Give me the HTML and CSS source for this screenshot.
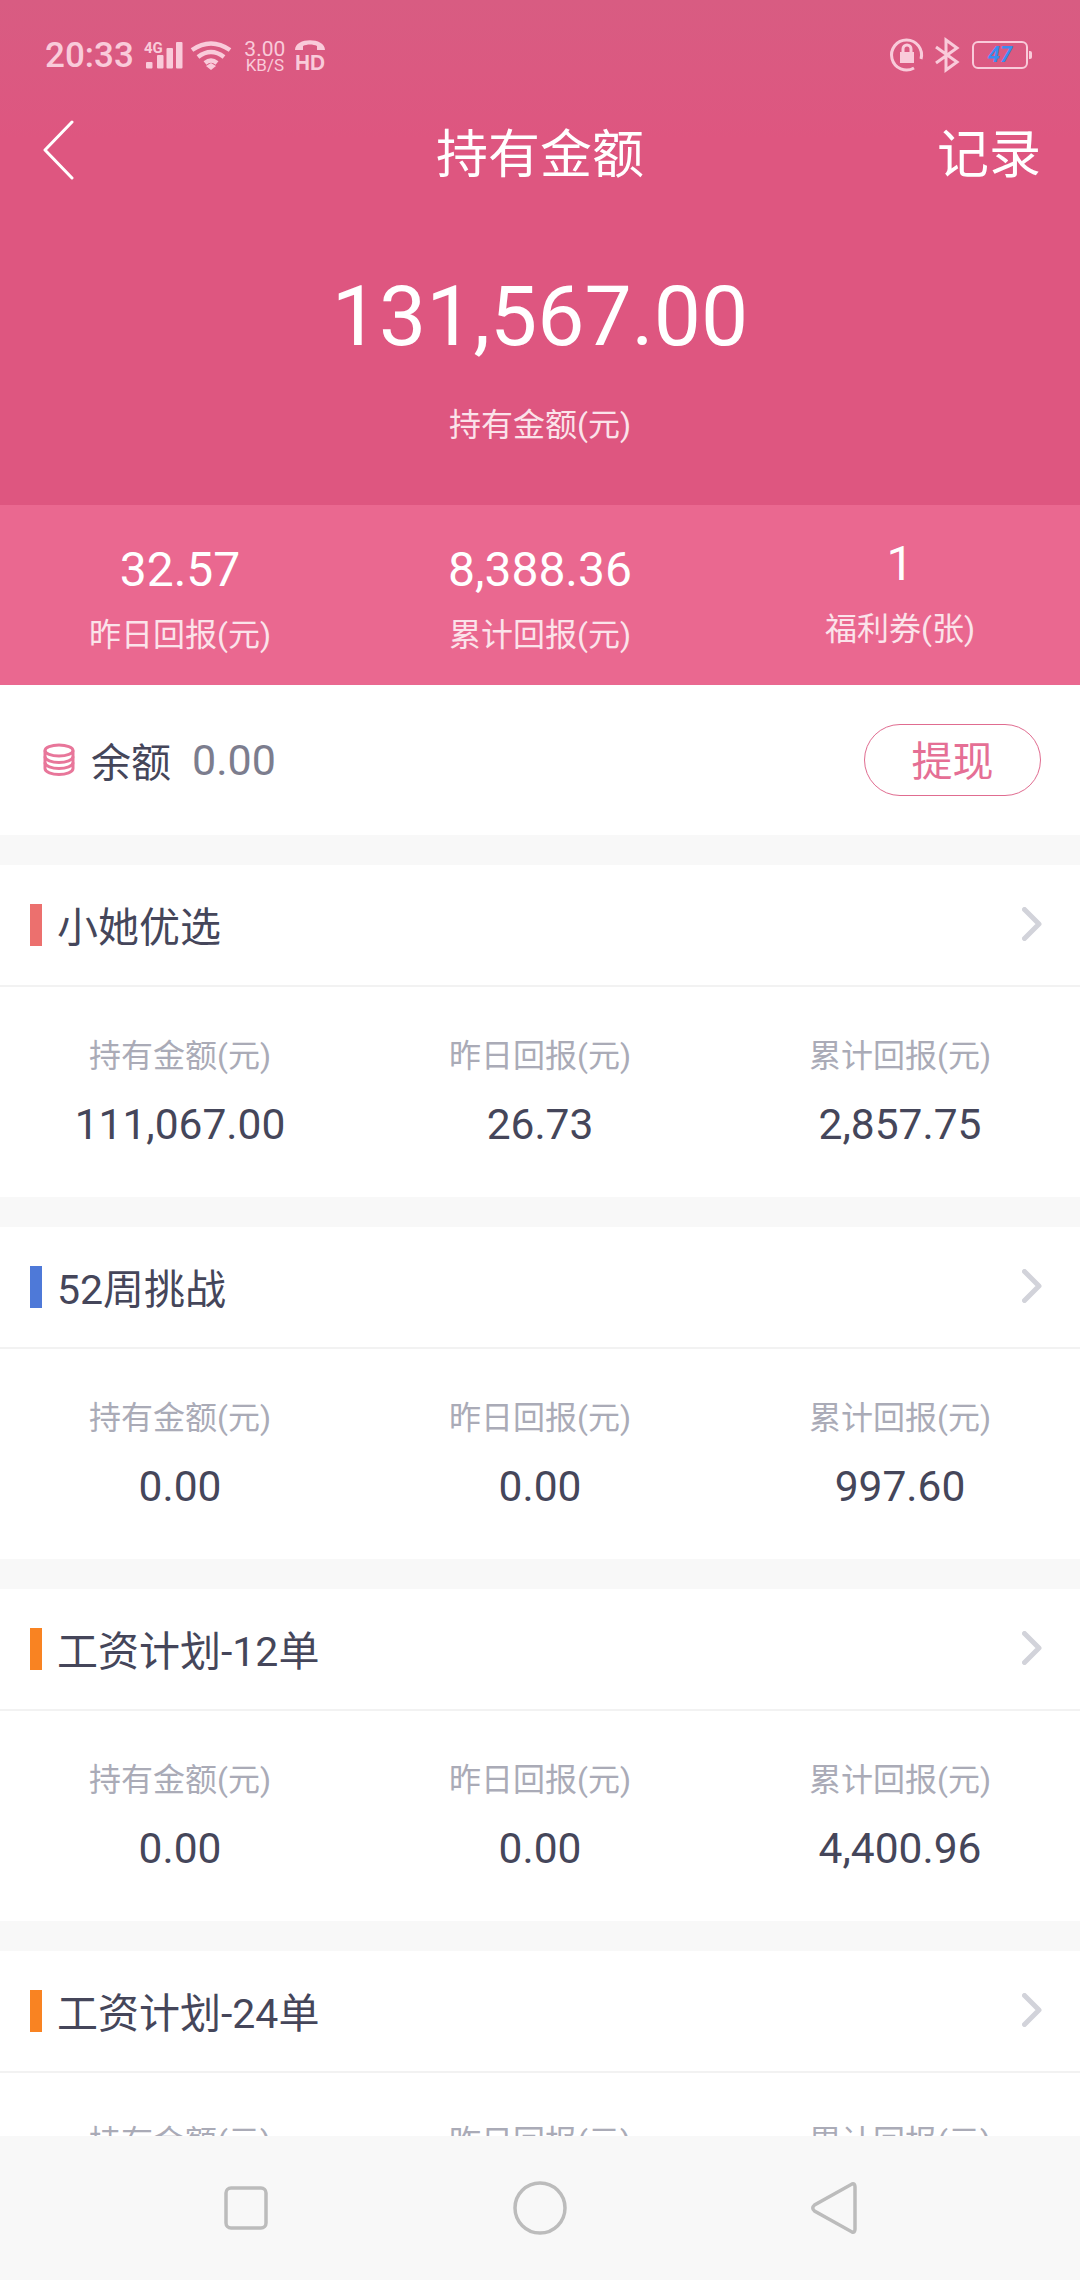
FILE: index.html
```html
<!DOCTYPE html>
<html lang="zh-CN">
<head>
    <meta charset="UTF-8">
    <meta name="viewport" content="width=device-width, initial-scale=1.0">
    <title>持有金额</title>
    <link rel="stylesheet" href="styles.css">
</head>
<body>
    <div class="screen">
        <div class="content">
            <div class="hero">
                <div class="status-bar">
                    <div class="status-left">
                        <span class="time">20:33</span>
                        <svg class="ic-signal" width="40" height="30" viewBox="0 0 40 30">
                            <text x="0" y="12" class="ic-4g">4G</text>
                            <rect x="2" y="21" width="6.500" height="6.500" rx="1"/>
                            <rect x="13" y="14" width="6.500" height="13.500" rx="1"/>
                            <rect x="22.500" y="7" width="6.500" height="20.500" rx="1"/>
                            <rect x="32" y="1" width="6.500" height="26.500" rx="1"/>
                        </svg>
                        <svg class="ic-wifi" width="40" height="30" viewBox="0 0 40 30">
                            <path d="M1 9 Q20 -4 39 9" />
                            <path d="M7 16 Q20 6 33 16" />
                            <path d="M14 22 Q20 17 26 22" />
                            <polygon class="fill" points="15,25 20,22 25,25 20,29"/>
                        </svg>
                        <div class="speed"><span class="speed-num">3.00</span><span class="speed-unit">KB/S</span></div>
                        <svg class="ic-hd" width="32" height="34" viewBox="0 0 32 34">
                            <path class="fill" d="M1 12 C1 -1 31 -1 31 12 L23 12 L23 8 C19 6 13 6 9 8 L9 12 Z"/>
                            <text x="1" y="32" class="ic-hd-text" textLength="30" lengthAdjust="spacingAndGlyphs">HD</text>
                        </svg>
                    </div>
                    <div class="status-right">
                        <svg class="ic-lock" width="34" height="34" viewBox="0 0 34 34">
                            <path d="M31 21 A15 15 0 1 0 24 30" />
                            <path class="fill" d="M10 14 h14 v11 h-14 z"/>
                            <path d="M13 14 v-3 a4 4 0 0 1 8 0 v3" />
                        </svg>
                        <svg class="ic-bt" width="26" height="34" viewBox="0 0 26 34">
                            <path d="M2 9 L23 24 L12 32 L12 2 L23 10 L2 25" />
                        </svg>
                        <div class="battery">
                            <div class="battery-body">47</div>
                            <div class="battery-cap"></div>
                        </div>
                    </div>
                </div>
                <div class="nav-bar">
                    <svg class="back" width="34" height="60" viewBox="0 0 34 60">
                        <path d="M29 2 L2 30 L29 58" />
                    </svg>
                    <h1 class="nav-title">持有金额</h1>
                    <span class="nav-action">记录</span>
                </div>
                <div class="total">131,567.00</div>
                <div class="total-label">持有金额(元)</div>
            </div>

            <div class="summary">
                <div class="summary-item">
                    <div class="summary-num">32.57</div>
                    <div class="summary-label">昨日回报(元)</div>
                </div>
                <div class="summary-item">
                    <div class="summary-num">8,388.36</div>
                    <div class="summary-label">累计回报(元)</div>
                </div>
                <div class="summary-item summary-raised">
                    <div class="summary-num">1</div>
                    <div class="summary-label">福利券(张)</div>
                </div>
            </div>

            <div class="balance">
                <svg class="ic-coins" width="32" height="34" viewBox="0 0 32 34">
                    <ellipse cx="16" cy="7.500" rx="14" ry="5.500"/>
                    <path d="M2 7.500 V25.500 C2 29 9 31.500 16 31.500 C23 31.500 30 29 30 25.500 V7.500"/>
                    <path d="M2 13.500 C2 17 9 19.500 16 19.500 C23 19.500 30 17 30 13.500"/>
                    <path d="M2 19.500 C2 23 9 25.500 16 25.500 C23 25.500 30 23 30 19.500"/>
                </svg>
                <span class="balance-label">余额</span>
                <span class="balance-num">0.00</span>
                <span class="withdraw">提现</span>
            </div>

            <section class="card">
                <div class="card-head">
                    <span class="mark mark-red"></span>
                    <span class="card-title">小她优选</span>
                    <svg class="arrow" width="20" height="34" viewBox="0 0 20 34"><path d="M2.500 2.500 L17 17 L2.500 31.500"/></svg>
                </div>
                <div class="card-body">
                    <div class="cell"><div class="cell-label">持有金额(元)</div><div class="cell-num">111,067.00</div></div>
                    <div class="cell"><div class="cell-label">昨日回报(元)</div><div class="cell-num">26.73</div></div>
                    <div class="cell"><div class="cell-label">累计回报(元)</div><div class="cell-num">2,857.75</div></div>
                </div>
            </section>

            <section class="card">
                <div class="card-head">
                    <span class="mark mark-blue"></span>
                    <span class="card-title">52周挑战</span>
                    <svg class="arrow" width="20" height="34" viewBox="0 0 20 34"><path d="M2.500 2.500 L17 17 L2.500 31.500"/></svg>
                </div>
                <div class="card-body">
                    <div class="cell"><div class="cell-label">持有金额(元)</div><div class="cell-num">0.00</div></div>
                    <div class="cell"><div class="cell-label">昨日回报(元)</div><div class="cell-num">0.00</div></div>
                    <div class="cell"><div class="cell-label">累计回报(元)</div><div class="cell-num">997.60</div></div>
                </div>
            </section>

            <section class="card">
                <div class="card-head">
                    <span class="mark mark-orange"></span>
                    <span class="card-title">工资计划-12单</span>
                    <svg class="arrow" width="20" height="34" viewBox="0 0 20 34"><path d="M2.500 2.500 L17 17 L2.500 31.500"/></svg>
                </div>
                <div class="card-body">
                    <div class="cell"><div class="cell-label">持有金额(元)</div><div class="cell-num">0.00</div></div>
                    <div class="cell"><div class="cell-label">昨日回报(元)</div><div class="cell-num">0.00</div></div>
                    <div class="cell"><div class="cell-label">累计回报(元)</div><div class="cell-num">4,400.96</div></div>
                </div>
            </section>

            <section class="card">
                <div class="card-head">
                    <span class="mark mark-orange"></span>
                    <span class="card-title">工资计划-24单</span>
                    <svg class="arrow" width="20" height="34" viewBox="0 0 20 34"><path d="M2.500 2.500 L17 17 L2.500 31.500"/></svg>
                </div>
                <div class="card-body">
                    <div class="cell"><div class="cell-label">持有金额(元)</div></div>
                    <div class="cell"><div class="cell-label">昨日回报(元)</div></div>
                    <div class="cell"><div class="cell-label">累计回报(元)</div></div>
                </div>
            </section>
        </div>

        <div class="sys-nav">
            <svg width="44" height="44" viewBox="0 0 44 44"><rect x="2" y="2" width="40" height="40" rx="5"/></svg>
            <svg width="54" height="54" viewBox="0 0 54 54"><circle cx="27" cy="27" r="25"/></svg>
            <svg width="46" height="54" viewBox="0 0 46 54"><path d="M41 3 Q44 2 44 6 V48 Q44 52 41 51 L3.500 30 Q0 27 3.500 24 Z"/></svg>
        </div>
    </div>
</body>
</html>
```

FILE: styles.css
```css
* {
    box-sizing: border-box;
}
html, body {
    margin: 0;
    padding: 0;
}
body {
    font-family: Roboto, "Noto Sans CJK SC", sans-serif;
    background: #f8f8f8;
}
.screen {
    width: 1080px;
    height: 2280px;
    display: flex;
    flex-direction: column;
    overflow: hidden;
}
.content {
    flex: 1;
    min-height: 0;
    overflow: hidden;
}
.hero {
    height: 505px;
    background: linear-gradient(#d85c82, #de5680 140px);
    color: #fff;
    text-align: center;
}
.status-bar {
    height: 105px;
    padding: 38px 48px 0 45px;
    display: flex;
    justify-content: space-between;
    align-items: flex-start;
    color: #f9cbda;
}
.status-left, .status-right {
    display: flex;
    align-items: center;
}
.status-bar svg {
    fill: #f9cbda;
    stroke: none;
    overflow: visible;
}
.time {
    font-size: 35px;
    font-weight: 500;
    line-height: 36px;
}
.ic-signal {
    margin-left: 10px;
}
.ic-4g {
    font-size: 15px;
    font-weight: 700;
}
.status-bar .ic-wifi {
    margin-left: 7px;
    fill: none;
}
.ic-wifi path {
    fill: none;
    stroke: #f9cbda;
    stroke-width: 4.500;
}
.ic-wifi .fill {
    fill: #f9cbda;
}
.speed {
    margin-left: 13px;
    display: flex;
    flex-direction: column;
    width: 42px;
    line-height: 1;
    text-align: center;
}
.speed-num {
    font-size: 21px;
    height: 18px;
}
.speed-unit {
    font-size: 17px;
    white-space: nowrap;
}
.ic-hd {
    margin-left: 8px;
    margin-top: -2px;
}
.ic-hd-text {
    font-family: "Liberation Sans", sans-serif;
    font-size: 22px;
    font-weight: 700;
}
.status-bar .ic-lock, .status-bar .ic-bt {
    fill: none;
}
.ic-lock path, .ic-bt path {
    fill: none;
    stroke: #f9cbda;
    stroke-width: 3;
}
.ic-lock .fill {
    fill: #f9cbda;
    stroke: none;
}
.ic-bt {
    margin-left: 10px;
}
.battery {
    margin-left: 12px;
    display: flex;
    align-items: center;
}
.battery-body {
    width: 56px;
    height: 28px;
    border: 2px solid #f9cbda;
    border-radius: 6px;
    color: #3b8cf0;
    font-size: 22px;
    font-weight: 700;
    font-style: italic;
    line-height: 24px;
    text-align: center;
}
.battery-cap {
    width: 3px;
    height: 8px;
    margin-left: 1px;
    background: #f9cbda;
    border-radius: 0 2px 2px 0;
}
.nav-bar {
    height: 90px;
    padding: 0 39px 0 43px;
    display: flex;
    align-items: center;
    justify-content: space-between;
    position: relative;
}
.back {
    fill: none;
    stroke: #fff;
    stroke-width: 3;
    stroke-linecap: round;
    stroke-linejoin: round;
}
.nav-title {
    position: absolute;
    left: 0;
    right: 0;
    margin: 0;
    font-size: 52px;
    font-weight: 400;
    text-align: center;
}
.nav-action {
    font-size: 52px;
}
.total {
    margin-top: 72px;
    font-size: 84px;
    line-height: 100px;
}
.total-label {
    margin-top: 34px;
    font-size: 32px;
    line-height: 48px;
    color: #fbe3ea;
}
.summary {
    height: 180px;
    background: #ea6890;
    color: #fff;
    display: grid;
    grid-template-columns: repeat(3, 1fr);
    text-align: center;
}
.summary-item {
    padding-top: 37px;
}
.summary-raised {
    padding-top: 31px;
}
.summary-num {
    font-size: 48px;
    line-height: 56px;
}
.summary-label {
    margin-top: 13px;
    font-size: 32px;
    line-height: 48px;
    color: #fbe3ea;
}
.balance {
    height: 150px;
    background: #fff;
    padding: 0 39px 0 43px;
    display: flex;
    align-items: center;
}
.ic-coins {
    fill: none;
    stroke: #e8769a;
    stroke-width: 3;
}
.balance-label {
    margin-left: 16px;
    font-size: 40px;
    color: #45465a;
}
.balance-num {
    margin-left: 21px;
    font-size: 43px;
    color: #7c7d8e;
}
.withdraw {
    margin-left: auto;
    width: 177px;
    height: 72px;
    border: 1.500px solid #e06c90;
    border-radius: 36px;
    color: #e56f95;
    font-size: 41px;
    line-height: 74px;
    text-align: center;
}
.card {
    margin-top: 30px;
    height: 332px;
    background: #fff;
}
.card-head {
    height: 122px;
    padding: 0 38px 0 30px;
    border-bottom: 2px solid #f2f2f2;
    display: flex;
    align-items: center;
}
.mark {
    width: 12px;
    height: 42px;
}
.mark-red {
    background: #ec706e;
}
.mark-blue {
    background: #4e79d8;
}
.mark-orange {
    background: #f98322;
}
.card-title {
    margin-left: 15px;
    padding-bottom: 3px;
    font-size: 41px;
    color: #45465a;
}
.arrow {
    margin-left: auto;
    margin-bottom: 3px;
    fill: none;
    stroke: #d2d3da;
    stroke-width: 5;
    stroke-linecap: round;
    stroke-linejoin: round;
}
.card-body {
    display: grid;
    grid-template-columns: repeat(3, 1fr);
    text-align: center;
    padding-top: 45px;
}
.cell-label {
    font-size: 32px;
    line-height: 48px;
    color: #aaabb7;
}
.cell-num {
    margin-top: 20px;
    font-size: 42.500px;
    line-height: 50px;
    color: #45465a;
}
.sys-nav {
    height: 144px;
    flex: none;
    background: #f8f8f8;
    padding-left: 224px;
    display: flex;
    align-items: center;
}
.sys-nav svg {
    fill: none;
    stroke: #bcbcbc;
    stroke-width: 3.500;
}
.sys-nav svg:nth-child(2) {
    margin-left: 245px;
}
.sys-nav svg:nth-child(3) {
    margin-left: 244px;
}
```
